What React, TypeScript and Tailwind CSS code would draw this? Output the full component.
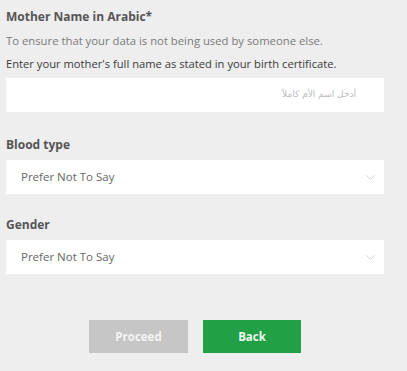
export default function App() {
  const font = { fontFamily: '"Open Sans", "Noto Sans", sans-serif' }

  const Select = ({ value }: { value: string }) => (
    <div className="flex h-[34px] w-[378px] items-center justify-between bg-white pl-[15px] pr-[8px]">
      <span className="text-[11.5px] text-[#666]">{value}</span>
      <svg width="11" height="7" viewBox="0 0 11 7" fill="none">
        <path d="M1 1l4.5 4.5L10 1" stroke="#d6d6d6" strokeWidth="1" />
      </svg>
    </div>
  )

  return (
    <div className="h-[371px] w-[407px] bg-[#eeeeee] pl-[6px] pt-[9px]" style={font}>
      <h2 className="text-[12px] font-bold leading-[16px] text-[#555]">Mother Name in Arabic*</h2>
      <p className="mt-[9px] text-[11.3px] leading-[14px] text-[#7a7a7a]">
        To ensure that your data is not being used by someone else.
      </p>
      <p className="mt-[8px] text-[11.2px] font-medium leading-[15px] text-[#3a3a3a]">
        Enter your mother's full name as stated in your birth certificate.
      </p>
      <div className="mt-[7px] flex h-[34px] w-[378px] items-center justify-end bg-white pr-[28px]">
        <span
          className="text-[9px] text-[#bbb]"
          dir="rtl"
          style={{ fontFamily: '"DejaVu Sans", sans-serif' }}
        >
          أدخل اسم الأم كاملاً
        </span>
      </div>

      <h3 className="mt-[25px] text-[12px] font-bold leading-[16px] text-[#555]">Blood type</h3>
      <div className="mt-[7px]">
        <Select value="Prefer Not To Say" />
      </div>

      <h3 className="mt-[23px] text-[12px] font-bold leading-[16px] text-[#555]">Gender</h3>
      <div className="mt-[7px]">
        <Select value="Prefer Not To Say" />
      </div>

      <div className="mt-[46px] flex gap-[15px] pl-[83px]">
        <button className="h-[33px] w-[99px] bg-[#c6c6c6] text-[11.5px] font-bold text-[#f4f4f4]">
          Proceed
        </button>
        <button className="h-[33px] w-[98px] bg-[#21a045] text-[11.5px] font-bold text-[#eefbf0]">
          Back
        </button>
      </div>
    </div>
  )
}
